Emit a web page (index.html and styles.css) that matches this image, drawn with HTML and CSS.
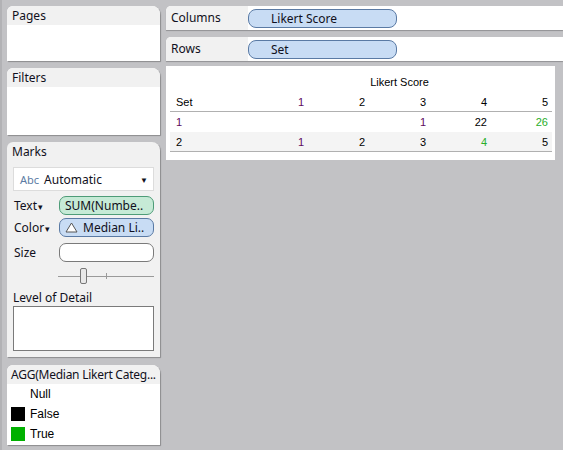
FILE: index.html
```html
<!DOCTYPE html>
<html>
<head>
<meta charset="utf-8">
<link rel="stylesheet" href="styles.css">
</head>
<body>
<div class="app">
  <div class="side">
    <div class="panel pages">
      <div class="ph">Pages</div>
      <div class="pb"></div>
    </div>
    <div class="panel filters">
      <div class="ph">Filters</div>
      <div class="pb"></div>
    </div>
    <div class="panel marks">
      <div class="mh">Marks</div>
      <div class="dropdown">
        <span class="abc">Abc</span><span class="auto">Automatic</span><span class="caret">&#9660;</span>
      </div>
      <div class="mrow rtext">
        <span class="mlabel">Text<span class="tri">&#9662;</span></span>
        <span class="mpill green">SUM(Numbe..</span>
      </div>
      <div class="mrow rcolor">
        <span class="mlabel">Color<span class="tri">&#9662;</span></span>
        <span class="mpill blue"><svg class="delta" width="13" height="11" viewBox="0 0 13 11"><path d="M6.5 1 L12 10 L1 10 Z" fill="#fff" stroke="#555" stroke-width="1"/></svg>Median Li..</span>
      </div>
      <div class="mrow rsize">
        <span class="mlabel">Size</span>
        <span class="mpill empty"></span>
      </div>
      <div class="slider">
        <div class="track"></div>
        <div class="tick"></div>
        <div class="thumb"></div>
      </div>
      <div class="lod">Level of Detail</div>
      <div class="lodbox"></div>
    </div>
    <div class="panel legend">
      <div class="ph lh">AGG(Median Likert Categ...</div>
      <div class="lb">
        <div class="li"><span class="sw none"></span>Null</div>
        <div class="li"><span class="sw black"></span>False</div>
        <div class="li"><span class="sw gr"></span>True</div>
      </div>
    </div>
  </div>
  <div class="main">
    <div class="shelf">
      <div class="slabel">Columns</div>
      <div class="sarea"><span class="spill">Likert Score</span></div>
    </div>
    <div class="shelf">
      <div class="slabel">Rows</div>
      <div class="sarea"><span class="spill">Set</span></div>
    </div>
    <div class="card">
      <table class="view">
        <tr class="title"><td></td><td colspan="5" class="ctr">Likert Score</td></tr>
        <tr class="head"><td class="set">Set</td><td class="p">1</td><td>2</td><td>3</td><td>4</td><td>5</td></tr>
        <tr class="r1"><td class="set p">1</td><td></td><td></td><td class="p">1</td><td>22</td><td class="g">26</td></tr>
        <tr class="r2"><td class="set">2</td><td class="p">1</td><td>2</td><td>3</td><td class="g">4</td><td>5</td></tr>
      </table>
    </div>
  </div>
</div>
</body>
</html>
```
FILE: styles.css
```css
html, body { margin: 0; padding: 0; }
body {
  width: 563px; height: 450px; overflow: hidden;
  background: #c2c2c5;
  font-family: "Noto Sans", "Open Sans", sans-serif;
  font-size: 12px; color: #101020;
}
.app { display: flex; height: 450px; border-left: 2px solid #b2b2b5; box-sizing: border-box; }
.side { width: 153px; margin-left: 5px; padding-top: 6px; display: flex; flex-direction: column; }
.panel {
  background: #fff; border-radius: 6px 8px 0 0;
  box-shadow: 1px 1px 1px rgba(0,0,0,0.28);
  overflow: hidden; flex-shrink: 0;
}
.ph { background: #f1f1f1; height: 19px; line-height: 19px; padding-left: 5px; white-space: nowrap; overflow: hidden; }
.pages { height: 55px; }
.filters { height: 67px; margin-top: 7px; }
.marks { height: 215px; margin-top: 7px; background: #f1f1f1; padding: 0 6px; box-sizing: border-box; }
.mh { height: 20px; line-height: 20px; margin-left: -1px; }
.dropdown {
  margin-top: 5px; height: 22px; background: #fff; border: 1px solid #dcdcdc;
  display: flex; align-items: center; padding-left: 6px; position: relative;
}
.abc { color: #5b7ba3; font-size: 11px; margin-right: 5px; }
.auto { font-size: 12px; }
.caret { position: absolute; right: 5px; top: 6px; font-size: 8px; }
.mrow { display: flex; align-items: center; height: 19px; }
.rtext { margin-top: 5px; }
.rcolor { margin-top: 3px; }
.rsize { margin-top: 6px; }
.mlabel { width: 45px; margin-left: 1px; white-space: nowrap; }
.tri { font-size: 9px; margin-left: 1px; }
.mpill {
  flex: 1; height: 17px; line-height: 17px; border-radius: 7px; padding-left: 5px;
  white-space: nowrap; overflow: hidden; display: flex; align-items: center;
}
.green { background: #c6ead6; border: 1px solid #4e9c78; }
.blue { background: #c8dcf4; border: 1px solid #5a7aa4; }
.empty { background: #fff; border: 1px solid #7a7a7a; }
.delta { margin-right: 5px; }
.slider { position: relative; height: 20px; margin-top: 6px; margin-left: 45px; }
.track { position: absolute; left: 0; right: 0; top: 8px; height: 1px; background: #9a9a9a; }
.tick { position: absolute; left: 48px; top: 5px; width: 1px; height: 6px; background: #9a9a9a; }
.thumb {
  position: absolute; left: 22px; top: 0; width: 5px; height: 14px;
  background: #e8e8e8; border: 1px solid #777; border-radius: 2px;
}
.lod { margin-top: 1px; height: 17px; line-height: 17px; }
.lodbox { height: 43px; background: #fff; border: 1px solid #7a7a7a; }
.legend { height: 80px; margin-top: 8px; }
.lh { padding-left: 4px; letter-spacing: -0.25px; }
.lb { padding-top: 0; font-family: "Liberation Sans", Arial, sans-serif; font-size: 12px; color: #000; }
.li { display: flex; align-items: center; height: 20px; }
.sw { width: 14px; height: 14px; margin-left: 4px; margin-right: 5px; }
.none { background: transparent; }
.black { background: #000; }
.gr { background: #00b000; }

.main { flex: 1; margin-left: 6px; padding-top: 6px; display: flex; flex-direction: column; }
.shelf {
  display: flex; height: 24px; margin-bottom: 7px; background: #fff;
  border-radius: 5px 0 0 0; overflow: hidden; box-shadow: 0 1px 1px rgba(0,0,0,0.25);
}
.slabel { width: 77px; background: #f1f1f1; line-height: 24px; padding-left: 5px; }
.sarea { flex: 1; display: flex; align-items: center; }
.spill {
  width: 125px; height: 17px; line-height: 17px; padding-left: 22px;
  background: #c8dcf4; border: 1px solid #5a7aa4; border-radius: 8px;
}
.card { width: 389px; height: 94px; margin-top: -2px; background: #fff; padding: 6px 0 0 4px; box-sizing: border-box; }
.view { border-collapse: collapse; font-family: "Liberation Sans", Arial, sans-serif; font-size: 11px; color: #000; table-layout: fixed; }
.view td { width: 57px; height: 20px; padding: 0 4px 0 0; text-align: right; }
.view td.set { width: 71px; padding: 0 0 0 6px; text-align: left; }
.view td.ctr { text-align: center; padding-right: 0; }
.view tr.title td { height: 20px; }
.view tr.head td { border-bottom: 1px solid #b0b0b0; height: 19px; }
.view tr.r2 td { background: #f4f4f4; border-bottom: 1px solid #b0b0b0; height: 19px; }
.view .p { color: #5e0a5e; }
.view .g { color: #2aae2a; }
```
